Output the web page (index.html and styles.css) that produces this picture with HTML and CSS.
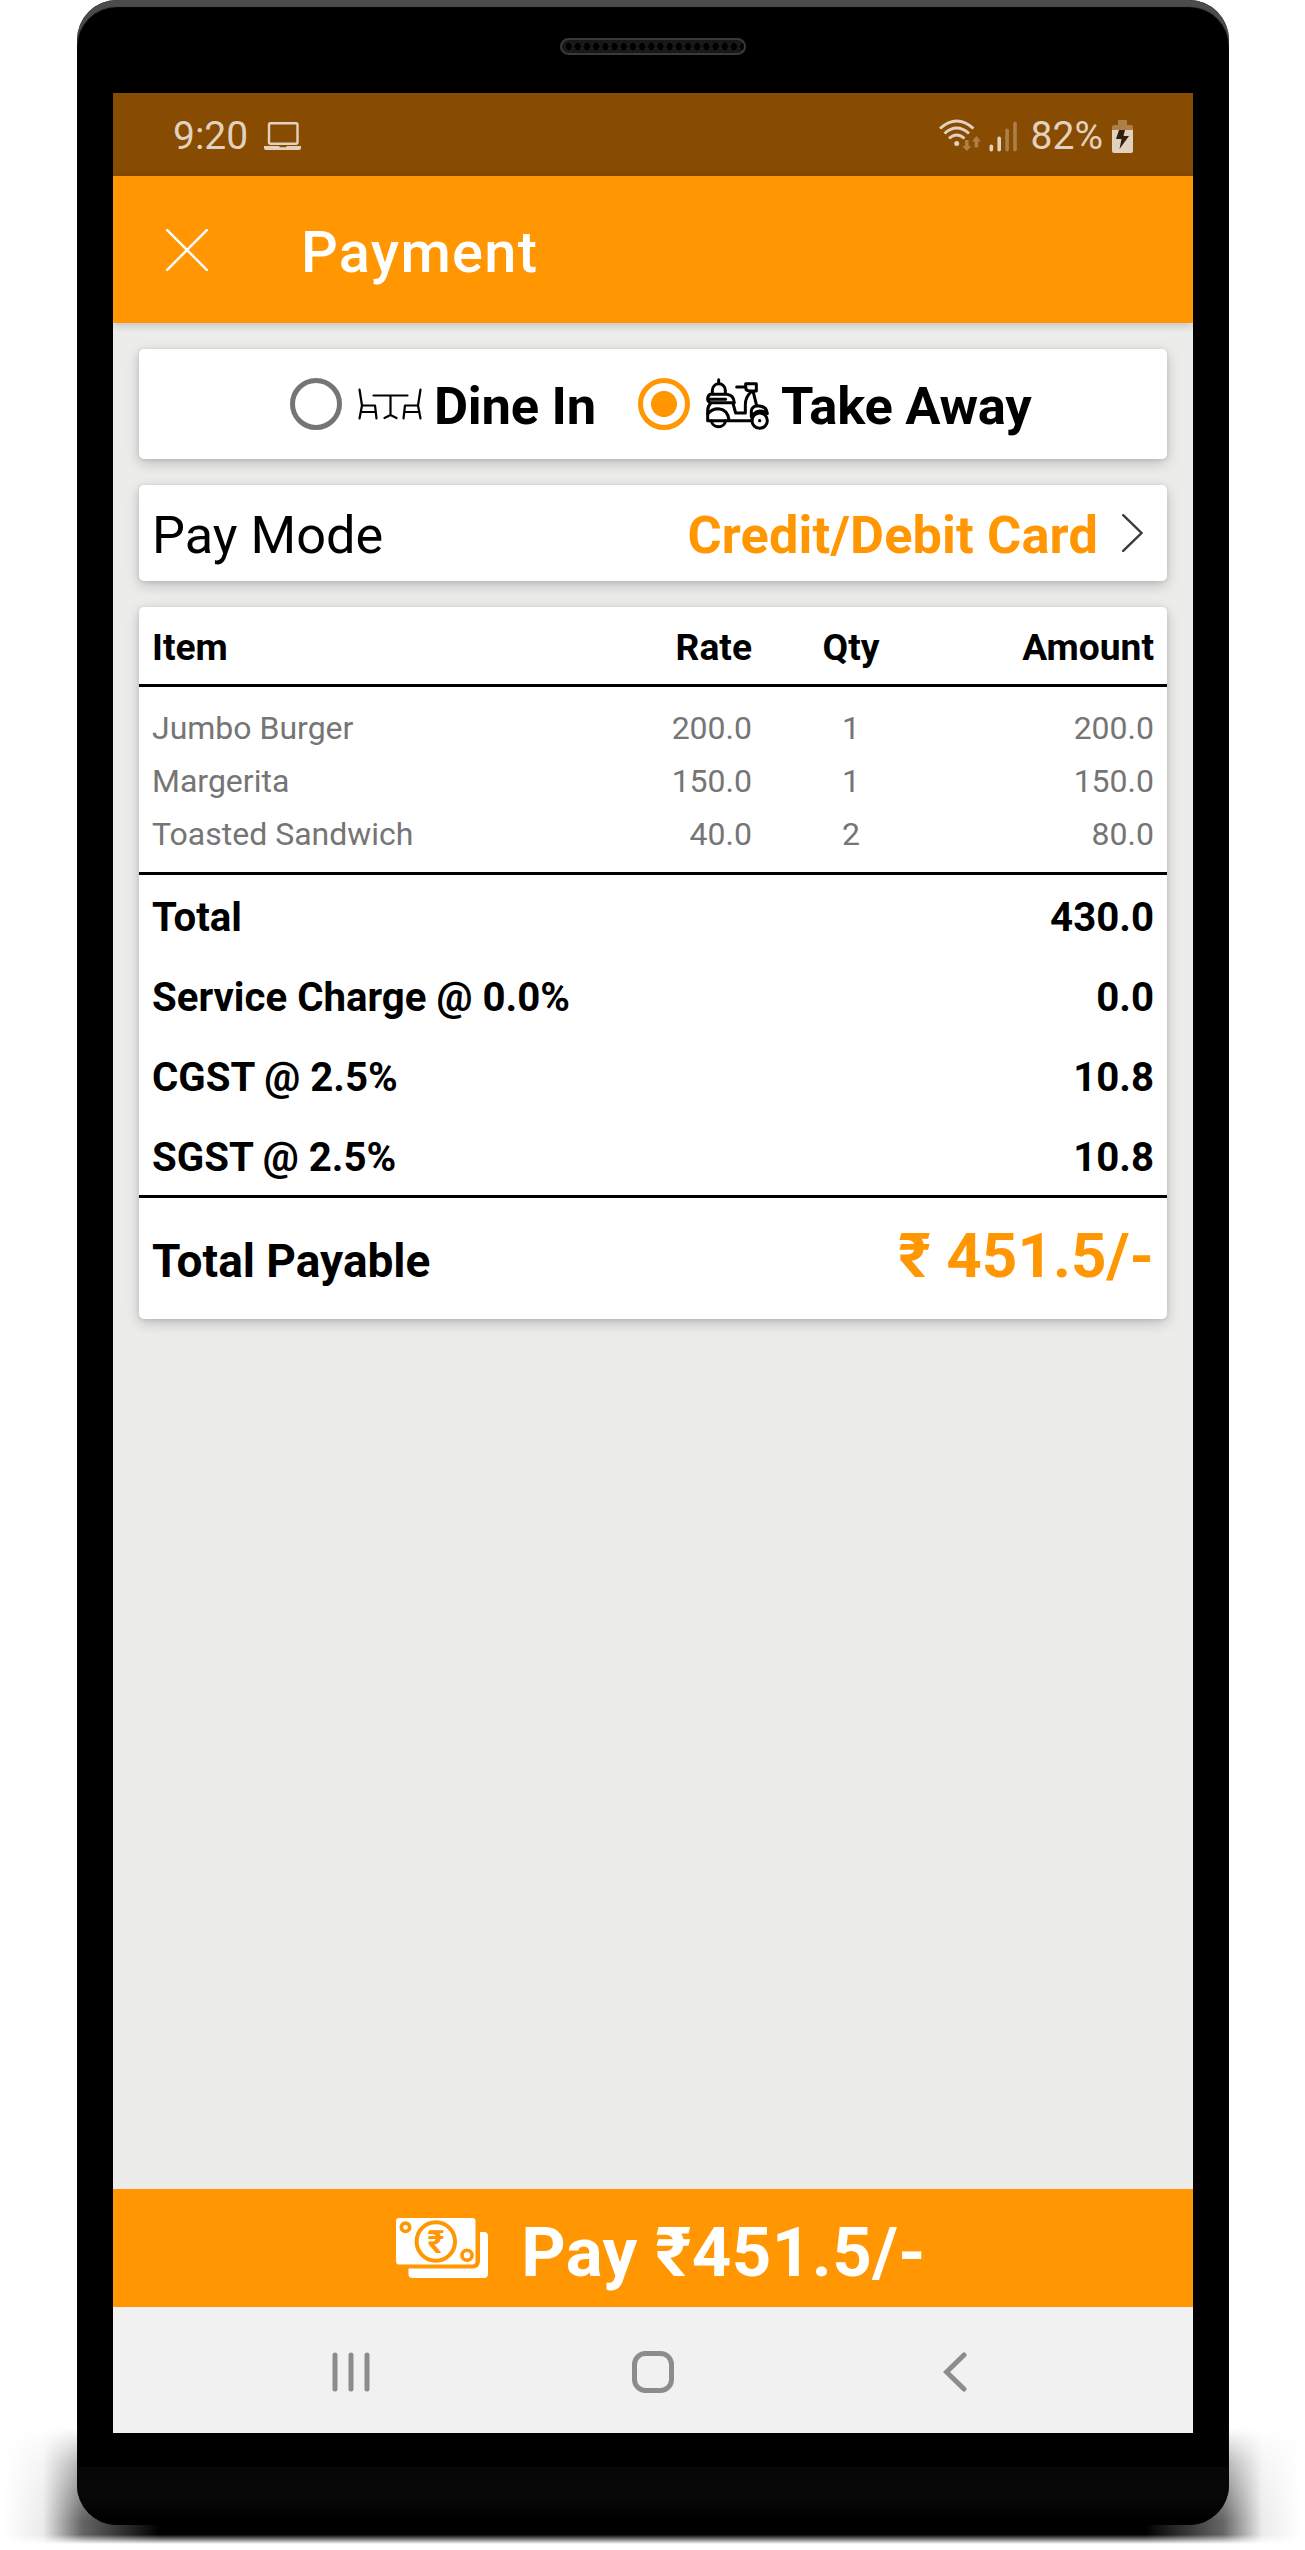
FILE: index.html
```html
<!DOCTYPE html>
<html lang="en">
<head>
    <meta charset="UTF-8">
    <title>Payment</title>
    <link rel="stylesheet" href="styles.css">
</head>
<body>
    <div class="phone">
        <div class="speaker"></div>

        <div class="screen">
            <div class="status-bar">
                <span>9:20</span>
                <svg class="laptop" width="37" height="28" viewBox="0 0 37 28">
                    <rect x="5" y="1.2" width="28.5" height="20.5" rx="1.5" fill="none" stroke="currentColor" stroke-width="2.4"/>
                    <path d="M0 24h15l1 1.2h6L23 24h14v2q0 2-2 2H2q-2 0-2-2z" fill="currentColor"/>
                </svg>
                <svg class="wifi" width="78" height="34" viewBox="0 0 78 34">
                    <g fill="none" stroke="currentColor" stroke-width="3">
                        <path d="M1 9.5Q17.7-5.5 34.5 9.5M5.5 14.5Q17.7 3.5 30 14.5M10 19.5Q17.7 12.5 25.5 19.5"/>
                    </g>
                    <circle cx="17.7" cy="24.5" r="2.5" fill="currentColor"/>
                    <g class="dim">
                        <path d="M26 21h3.6v6h2.9l-4.7 5-4.7-5H26zM35.6 28.500h3.6v-6H42l-4.6-5.500-4.6 5.500h2.8z"/>
                        <rect x="66.3" y="9.5" width="3.6" height="23" rx="1.8"/>
                        <rect x="74.2" y="2.5" width="3.6" height="30" rx="1.8"/>
                    </g>
                    <rect x="50.5" y="25.5" width="3.6" height="7" rx="1.8" fill="currentColor"/>
                    <rect x="58.4" y="17.5" width="3.6" height="15" rx="1.8" fill="currentColor"/>
                </svg>
                <span class="percent">82%</span>
                <svg class="battery" width="21" height="33" viewBox="0 0 21 33">
                    <path class="dim" d="M6 0h9v5h4q2 0 2 2v3H0V7q0-2 2-2h4z"/>
                    <path d="M0 10h21v21q0 2-2 2H2q-2 0-2-2z" fill="currentColor"/>
                    <path d="M7 10h6l-1.5 6H17L7.5 29l2-10H4z" fill="#33200a"/>
                </svg>
            </div>

            <div class="toolbar">
                <svg width="42" height="42" viewBox="0 0 42 42">
                    <path d="M1.2 1.2l39.6 39.6M40.8 1.2L1.2 40.8" stroke="#fff" stroke-width="2.5" stroke-linecap="round"/>
                </svg>
                <h1>Payment</h1>
            </div>

            <div class="content">
                <div class="card order-type">
                    <span class="radio"></span>
                    <svg class="dine" width="64" height="32" viewBox="0 0 64 32">
                        <g fill="none" stroke="#000" stroke-width="2.2" stroke-linecap="round" stroke-linejoin="round">
                            <path d="M1.5 1.5L4 17.5 1.500 30.5M4 17.5h13l1.5 13M3 24h14"/>
                            <path d="M62.5 1.5L60 17.5l2.5 13M60 17.5H47l-1.5 13M61 24H47"/>
                            <path d="M15.5 7.5h34M32.5 7.5v19.5M26.5 30l6-3 6 3"/>
                        </g>
                    </svg>
                    <span class="label">Dine In</span>
                    <span class="radio checked"></span>
                    <svg class="scooter" width="63" height="52" viewBox="0 0 189 156">
                        <g fill="none" stroke="#000" stroke-width="9" stroke-linejoin="round" stroke-linecap="round">
                            <path d="M38 5v11M19 47V37a19.5 19.5 0 0 1 39 0v10"/>
                            <path d="M12 49h50q21 2 23 25H13Q5 71 5 64h54M12 49q-7 4-7 15"/>
                            <path d="M14 76q-9 8-9 22v30h132"/>
                            <path d="M5 108q12-16 32-16 28 2 32 34M16 129a22 22 0 0 0 43 0"/>
                            <path d="M81 76l8 29h29V80q0-23 17-38M142 43l10 40"/>
                            <path d="M92 27h26M119 17h32v22h-20q-12 0-12-11z"/>
                            <path d="M136 116V97q4-14 19-14 27 1 29 24-9-9-23-8-22 2-24 29"/>
                            <circle cx="161" cy="128" r="23"/>
                        </g>
                        <circle cx="161" cy="128" r="5"/>
                    </svg>
                    <span class="label">Take Away</span>
                </div>

                <div class="card pay-mode">
                    <span>Pay Mode</span>
                    <span class="mode">Credit/Debit Card</span>
                    <svg width="21" height="38" viewBox="0 0 21 38">
                        <path d="M1.2 1.2L19.5 19 1.2 36.8" fill="none" stroke="#3a3a3a" stroke-width="2.4" stroke-linecap="round"/>
                    </svg>
                </div>

                <div class="card bill">
                    <div class="row head">
                        <span>Item</span><span>Rate</span><span>Qty</span><span>Amount</span>
                    </div>
                    <div class="items">
                        <div class="row"><span>Jumbo Burger</span><span>200.0</span><span>1</span><span>200.0</span></div>
                        <div class="row"><span>Margerita</span><span>150.0</span><span>1</span><span>150.0</span></div>
                        <div class="row"><span>Toasted Sandwich</span><span>40.0</span><span>2</span><span>80.0</span></div>
                    </div>
                    <div class="totals">
                        <div><span>Total</span><span>430.0</span></div>
                        <div><span>Service Charge @ 0.0%</span><span>0.0</span></div>
                        <div><span>CGST @ 2.5%</span><span>10.8</span></div>
                        <div><span>SGST @ 2.5%</span><span>10.8</span></div>
                    </div>
                    <div class="payable">
                        <span>Total Payable</span>
                        <span class="sum">₹ 451.5/-</span>
                    </div>
                </div>
            </div>

            <div class="pay-button">
                <svg width="92" height="60" viewBox="0 0 92 60">
                    <path d="M84 14h4q4 0 4 4v38q0 4-4 4H16.5q-4 0-4-4v-5.500H76q8 0 8-8z" fill="#fff"/>
                    <rect width="79.5" height="46.5" rx="3" fill="#fff"/>
                    <g fill="#fff" stroke="#ff9602">
                        <circle cx="39.8" cy="23.5" r="19.2" stroke-width="4"/>
                        <circle cx="9.5" cy="9.3" r="4.2" stroke-width="3.6"/>
                        <circle cx="71" cy="37.3" r="5" stroke-width="3.6"/>
                    </g>
                    <text x="40" y="34.5" text-anchor="middle" font-size="32" font-weight="700" fill="#ff9602">₹</text>
                </svg>
                <span>Pay ₹451.5/-</span>
            </div>

            <div class="nav-bar">
                <svg width="38" height="40" viewBox="0 0 38 40">
                    <path d="M3 3v34M19 3v34M35 3v34" stroke="#8c8c8c" stroke-width="5" stroke-linecap="round"/>
                </svg>
                <svg class="home" width="42" height="42" viewBox="0 0 42 42">
                    <rect x="2.5" y="2.5" width="37" height="37" rx="11" fill="none" stroke="#8c8c8c" stroke-width="5"/>
                </svg>
                <svg width="24" height="40" viewBox="0 0 24 40">
                    <path d="M21 3L3.5 20 21 37" fill="none" stroke="#8c8c8c" stroke-width="5" stroke-linecap="round"/>
                </svg>
            </div>
        </div>
        <div class="chin"></div>
    </div>
    <div class="floor-shadow"></div>
</body>
</html>
```
FILE: styles.css
```css
* { box-sizing: border-box; }
body { margin: 0; height: 2550px; background: #fff; font-family: Roboto, sans-serif; color: #000; overflow: hidden; position: relative; }
svg { display: block; flex: none; }
span { white-space: nowrap; }

/* phone body */
.phone { width: 1152px; height: 2525px; margin: 0 auto 0 77px; padding: 38px 36px 0; background: #000; border-radius: 40px; box-shadow: inset 0 7px 1px #4c4c4c; position: relative; z-index: 1; overflow: hidden; }
.speaker { width: 186px; height: 17px; margin: 0 auto 38px 447px; border: 2px solid #393939; border-radius: 9px; background: radial-gradient(ellipse 3.6px 4.5px at 50% 50%, #000 85%, #2c2c2c 100%, #181818) 2px 0 / 9.2px 13px; }
.chin { height: 58px; margin: 34px -36px 0; background: linear-gradient(#070707, #080808 50%, #000 95%); }
.floor-shadow { position: absolute; left: 4px; right: 4px; top: 2428px; height: 116px; background: linear-gradient(90deg, transparent, rgba(0,0,0,.08) 3%, rgba(0,0,0,.6) 6%, #000 12%, #000 88%, rgba(0,0,0,.6) 94%, rgba(0,0,0,.08) 97%, transparent); -webkit-mask-image: linear-gradient(transparent, rgba(0,0,0,.5) 30%, #000 80%, #000 92%, transparent); mask-image: linear-gradient(transparent, rgba(0,0,0,.5) 30%, #000 80%, #000 92%, transparent); }

.screen { width: 1080px; height: 2340px; background: #ececea; display: flex; flex-direction: column; }

/* status bar */
.status-bar { height: 83px; padding: 3px 60px 0; display: flex; align-items: center; background: #874b02; color: #e2d1be; font-size: 39px; }
.laptop { margin-left: 16px; }
.wifi { margin-left: auto; }
.dim { fill: #ae7f48; }
.percent { margin-left: 14px; }
.battery { margin-left: 9px; }

.toolbar { height: 147px; padding: 0 53px; display: flex; align-items: center; gap: 93px; background: #ff9602; box-shadow: 0 2px 9px rgba(0,0,0,.2); }
.toolbar h1 { margin: 5px 0 0; color: #fff; font-size: 57.75px; font-weight: 500; letter-spacing: 1.3px; }

/* cards */
.content { flex: 1; padding: 26px; display: flex; flex-direction: column; gap: 26px; }
.card { background: #fff; border-radius: 5px; box-shadow: 0 4px 14px rgba(0,0,0,.2), 0 1px 4px rgba(0,0,0,.1); }
.order-type { height: 110px; padding-left: 151px; display: flex; align-items: center; font-size: 52.5px; font-weight: 700; letter-spacing: -.25px; }
.radio { width: 52px; height: 52px; border: 5px solid #757575; border-radius: 50%; flex: none; }
.radio.checked { margin-left: 42px; border-color: #ff9602; background: radial-gradient(circle, #ff9602 12.6px, #fff 13.4px); }
.dine { margin-left: 16px; }
.scooter { margin-left: 16px; }
.label { margin: 4px 0 0 12px; }

.pay-mode { height: 96px; padding: 0 24px 0 13px; display: flex; align-items: center; font-size: 52.3px; }
.pay-mode span { margin-top: 4px; }
.pay-mode .mode { margin-left: auto; margin-right: 24px; color: #ff9602; font-weight: 700; letter-spacing: .15px; }

/* bill */
.bill { height: 712px; }
.row { display: grid; grid-template-columns: 400px 200px 198px 1fr; padding: 0 13px; line-height: 53px; }
.row span { text-align: right; }
.row span:first-child { text-align: left; }
.row span:nth-child(3) { text-align: center; }
.head { height: 80px; padding-top: 4px; border-bottom: 3px solid #000; font-size: 37.2px; line-height: 73px; font-weight: 700; }
.items { height: 188px; padding-top: 15px; border-bottom: 3px solid #000; color: #757575; font-size: 32px; }
.totals { height: 323px; padding: 18px 13px 0; display: flex; flex-direction: column; gap: 30px; border-bottom: 3px solid #000; font-size: 40.2px; line-height: 50px; font-weight: 700; }
.totals div, .payable { display: flex; justify-content: space-between; }
.payable { padding: 21px 13px 0; align-items: baseline; font-size: 46px; font-weight: 700; }
.sum { color: #ff9602; font-size: 62px; line-height: 74px; }

.pay-button { height: 118px; padding-left: 16px; display: flex; align-items: center; justify-content: center; gap: 33px; background: #ff9602; color: #fff; font-size: 69px; font-weight: 700; }
.pay-button span { margin-top: 8px; letter-spacing: .4px; }
.nav-bar { height: 126px; padding: 4px 226px 0 219px; display: flex; align-items: center; justify-content: space-between; background: #f1f1f1; }
.home { margin-right: 7px; }
```
